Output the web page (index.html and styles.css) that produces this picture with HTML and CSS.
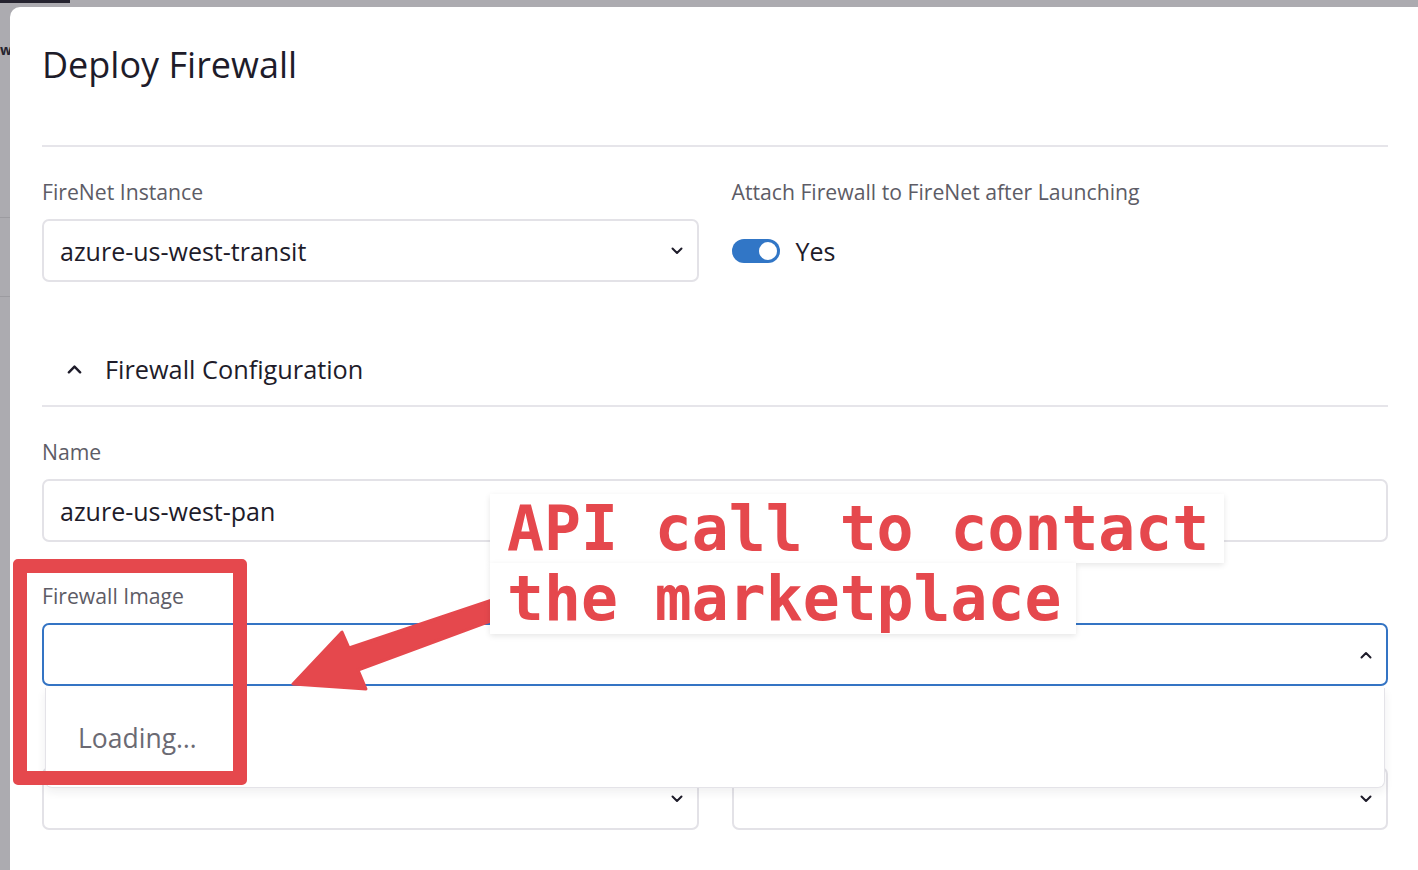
FILE: index.html
```html
<!DOCTYPE html>
<html lang="en">
<head>
<meta charset="utf-8">
<title>Deploy Firewall</title>
<link rel="stylesheet" href="styles.css">
</head>
<body>
<div class="app">
  <div class="app-topbar"></div>
  <div class="app-side">
    <div class="app-word">w</div>
    <div class="app-rule"></div>
    <div class="app-rule second"></div>
  </div>
</div>

<div class="modal">
  <header class="modal-head">
    <h1 class="modal-title">Deploy Firewall</h1>
  </header>

  <div class="row first-row">
    <div class="field">
      <div class="label">FireNet Instance</div>
      <div class="select">
        <span class="value">azure-us-west-transit</span>
        <svg class="chev" viewBox="0 0 12 8" width="12" height="8"><path d="M1.5 1.5 L6 6 L10.5 1.5"/></svg>
      </div>
    </div>
    <div class="field">
      <div class="label">Attach Firewall to FireNet after Launching</div>
      <div class="toggle-row">
        <span class="toggle"><span class="knob"></span></span>
        <span class="value">Yes</span>
      </div>
    </div>
  </div>

  <div class="section-head">
    <svg class="chev-up" viewBox="0 0 16 10" width="15" height="10"><path d="M2 8.5 L8 2.5 L14 8.5"/></svg>
    <span>Firewall Configuration</span>
  </div>

  <div class="field name-field">
    <div class="label">Name</div>
    <div class="select input">
      <span class="value">azure-us-west-pan</span>
    </div>
  </div>

  <div class="field image-field">
    <div class="label">Firewall Image</div>
    <div class="select-wrap">
      <div class="select focused">
        <span class="value"></span>
        <svg class="chev" viewBox="0 0 12 8" width="12" height="8"><path d="M1.5 6.5 L6 2 L10.5 6.5"/></svg>
      </div>
      <div class="menu">
        <span>Loading…</span>
      </div>
    </div>
  </div>

  <div class="row last-row">
    <div class="field">
      <div class="label">&nbsp;</div>
      <div class="select">
        <span class="value"></span>
        <svg class="chev" viewBox="0 0 12 8" width="12" height="8"><path d="M1.5 1.5 L6 6 L10.5 1.5"/></svg>
      </div>
    </div>
    <div class="field">
      <div class="label">&nbsp;</div>
      <div class="select">
        <span class="value"></span>
        <svg class="chev" viewBox="0 0 12 8" width="12" height="8"><path d="M1.5 1.5 L6 6 L10.5 1.5"/></svg>
      </div>
    </div>
  </div>
</div>

<div class="mark-box"></div>
<svg class="arrow" viewBox="0 0 1418 870" width="1418" height="870">
  <polygon points="510,594 349,648 342,632 293,684 366,689 358,670 510,614"/>
</svg>
<div class="callout">
  <div class="callout-line">API call to contact</div>
  <div class="callout-line second">the marketplace</div>
</div>
</body>
</html>
```

FILE: styles.css
```css
* { box-sizing: border-box; }

html, body {
  margin: 0;
  padding: 0;
  width: 1418px;
  height: 870px;
  overflow: hidden;
}

body {
  position: relative;
  background: #acabb0;
  font-family: "Open Sans", "Noto Sans", sans-serif;
  color: #1e1c2a;
}

/* underlying app behind the overlay */
.app {
  position: absolute;
  inset: 0;
}
.app-topbar {
  width: 70px;
  height: 3px;
  background: #25232f;
}
.app-side {
  width: 10px;
  padding-top: 36px;
}
.app-word {
  font-size: 14px;
  font-weight: 700;
  line-height: 22px;
  color: #25232f;
}
.app-rule {
  height: 1px;
  background: #9c9ba0;
  margin-top: 156px;
}
.app-rule.second {
  margin-top: 78px;
}

/* modal */
.modal {
  position: absolute;
  top: 7px;
  left: 10px;
  right: 0;
  bottom: 0;
  background: #fff;
  border-top-left-radius: 10px;
  padding: 0 30px 0 32px;
  z-index: 1;
}

.modal-head {
  padding: 36px 0 58px;
  border-bottom: 2px solid #e6e5ea;
}
.modal-title {
  margin: 0;
  font-size: 36px;
  line-height: 44px;
  font-weight: 400;
  color: #1e1c2a;
}

.row {
  display: grid;
  grid-template-columns: 1fr 1fr;
  column-gap: 33px;
}
.first-row { margin-top: 31px; }

.label {
  font-size: 21.2px;
  line-height: 28px;
  color: #5d5c66;
  margin-bottom: 13px;
}

.select {
  height: 63px;
  border: 2px solid #e3e2e7;
  border-radius: 7px;
  background: #fff;
  display: flex;
  align-items: center;
  justify-content: space-between;
  padding: 0 14px 0 16px;
}
.select .value {
  font-size: 25px;
  color: #1e1c2a;
}
.chev {
  fill: none;
  stroke: #1e1c2a;
  stroke-width: 2;
  stroke-linecap: round;
  stroke-linejoin: round;
}

.toggle-row {
  height: 63px;
  display: flex;
  align-items: center;
  gap: 16px;
}
.toggle-row .value {
  font-size: 25px;
  color: #1e1c2a;
}
.toggle {
  width: 48px;
  height: 24px;
  border-radius: 12px;
  background: #3176c6;
  display: flex;
  align-items: center;
  justify-content: flex-end;
  padding-right: 3px;
}
.knob {
  width: 18px;
  height: 18px;
  border-radius: 50%;
  background: #fff;
}

.section-head {
  margin-top: 57px;
  height: 68px;
  padding-bottom: 6px;
  border-bottom: 2px solid #e6e5ea;
  display: flex;
  align-items: center;
  padding-left: 25px;
  gap: 23px;
  font-size: 25.3px;
  color: #1e1c2a;
}
.chev-up {
  fill: none;
  stroke: #1e1c2a;
  stroke-width: 2.6;
  stroke-linecap: round;
  stroke-linejoin: round;
}

.name-field { margin-top: 31px; }
.image-field { margin-top: 40px; }
.last-row { margin-top: 40px; }

.select.focused {
  border-color: #3474c4;
}

.select-wrap {
  position: relative;
}
.menu {
  position: absolute;
  top: calc(100% + 2px);
  left: 3px;
  right: 3px;
  height: 100px;
  background: #fff;
  border: 1px solid #e4e3e8;
  border-top: none;
  border-radius: 0 0 7px 7px;
  box-shadow: 0 4px 10px rgba(30, 28, 42, 0.07);
  display: flex;
  align-items: center;
  padding-left: 32px;
  font-size: 26.5px;
  color: #6b6a73;
  z-index: 2;
}

/* annotations */
.mark-box {
  position: absolute;
  left: 13px;
  top: 559px;
  width: 234px;
  height: 226px;
  border: 14px solid #e5484d;
  border-radius: 5px;
  z-index: 5;
}

.arrow {
  position: absolute;
  left: 0;
  top: 0;
  z-index: 6;
  pointer-events: none;
}
.arrow polygon {
  fill: #e5484d;
  stroke: #e5484d;
  stroke-width: 3;
  stroke-linejoin: round;
}

.callout {
  position: absolute;
  left: 490px;
  top: 494px;
  z-index: 7;
  display: flex;
  flex-direction: column;
  align-items: flex-start;
}
.callout-line {
  background: #fff;
  box-shadow: 0 2px 6px rgba(0, 0, 0, 0.10);
  font-family: "DejaVu Sans Mono", "Liberation Mono", monospace;
  font-weight: 700;
  font-size: 61.4px;
  line-height: 69px;
  height: 69px;
  color: #e5484d;
  padding: 0 15px 0 17px;
  white-space: pre;
}
.callout-line.second {
  height: 71px;
  line-height: 71px;
}
```
